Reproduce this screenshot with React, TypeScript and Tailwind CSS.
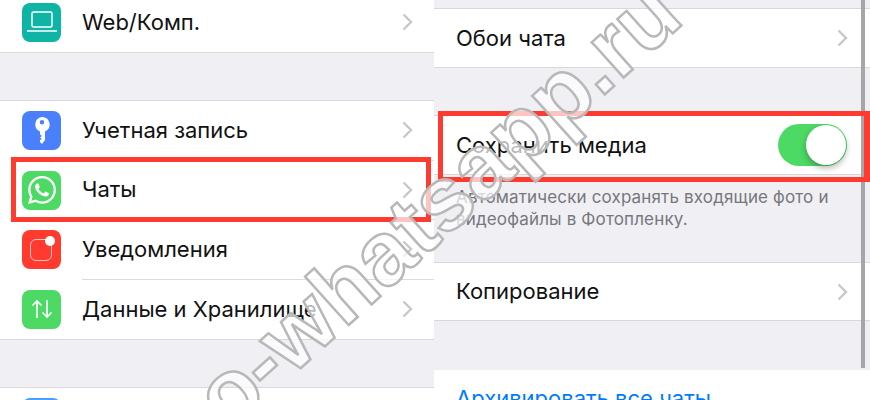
import React from 'react';
import { SiWhatsapp } from 'react-icons/si';

const Chevron = () => (
  <svg width="11" height="18" viewBox="0 0 11 18" className="shrink-0" fill="none">
    <path d="M1.5 1.5 9 9l-7.5 7.5" stroke="#c7c7cc" strokeWidth="2.4" />
  </svg>
);

const Laptop = () => (
  <svg width="30" height="24" viewBox="0 0 30 24" fill="none" stroke="#fff" strokeWidth="1.5">
    <rect x="5" y="2" width="20" height="15" rx="1.5" />
    <path d="M0 21h30" />
  </svg>
);

const Key = () => (
  <svg width="16" height="28" viewBox="0 0 16 28" fill="#fff">
    <path d="M8 0a7.5 7.5 0 0 1 3 14.4V23l-3 4-2-2v-2l2-1-2-1.5 2-1.5-2-1.5v-3.100A7.500 7.500 0 0 1 8 0Zm0 3a2.200 2.200 0 1 0 0 4.400A2.200 2.200 0 0 0 8 3Z" fillRule="evenodd" />
  </svg>
);

const Notif = () => (
  <div className="relative w-full h-full">
    <div className="absolute left-[8px] top-[9px] w-[22px] h-[22px] rounded-[6px] border border-[#ffc4bf]" />
    <div className="absolute left-[23px] top-[6px] w-[10px] h-[10px] rounded-full bg-white" />
  </div>
);

const Arrows = () => (
  <svg width="22" height="20" viewBox="0 0 22 20" fill="none" stroke="#fff" strokeWidth="1.7">
    <path d="M6 19V2M1.500 6.500 6 2l4.500 4.500M16 1v17M11.500 13.500 16 18l4.500-4.500" />
  </svg>
);

const IconBox = ({ className, children }: { className: string; children?: React.ReactNode }) => (
  <div className={`w-[39px] h-[39px] rounded-[8px] shrink-0 flex items-center justify-center ${className}`}>
    {children}
  </div>
);

const Row = ({ icon, label, sep = false }: { icon: React.ReactNode; label: string; sep?: boolean }) => (
  <div className="h-[59.5px] pl-[22px] flex items-center gap-[21px]">
    {icon}
    <div className={`flex-1 h-full flex items-center justify-between pr-[21px] ${sep ? 'border-b border-[#dcdce0]' : ''}`}>
      <span>{label}</span>
      <Chevron />
    </div>
  </div>
);

const Plain = ({ label }: { label: string }) => (
  <div className="h-full pl-[22px] pr-[22px] flex items-center justify-between">
    <span>{label}</span>
    <Chevron />
  </div>
);

export default function App() {
  return (
    <div
      className="relative w-[870px] h-[400px] overflow-hidden flex bg-[#efeff4] text-[22px] text-[#111]"
      style={{ fontFamily: 'Inter, "Liberation Sans", sans-serif' }}
    >
      {/* left phone */}
      <div className="w-[434px] shrink-0 flex flex-col">
        <div className="bg-white h-[53px] shrink-0 pb-[8px] pl-[22px] pr-[21px] flex items-center gap-[21px] border-b border-[#d8d8dc]">
          <IconBox className="bg-[#0fb5a4]"><Laptop /></IconBox>
          <div className="flex-1 flex items-center justify-between">
            <span>Web/Комп.</span>
            <Chevron />
          </div>
        </div>
        <div className="h-[47px] shrink-0" />
        <div className="bg-white border-y border-[#d8d8dc] shrink-0">
          <Row icon={<IconBox className="bg-[#4a80fb]"><Key /></IconBox>} label="Учетная запись" sep />
          <Row icon={<IconBox className="bg-[#4cd964]"><SiWhatsapp className="text-white text-[28px]" /></IconBox>} label="Чаты" sep />
          <Row icon={<IconBox className="bg-[#ff3b30]"><Notif /></IconBox>} label="Уведомления" sep />
          <Row icon={<IconBox className="bg-[#4cd964]"><Arrows /></IconBox>} label="Данные и Хранилище" />
        </div>
        <div className="h-[47px] shrink-0" />
        <div className="bg-white border-t border-[#d8d8dc] flex-1 pl-[22px] pt-[10px]">
          <div className="w-[39px] h-[39px] rounded-[8px] bg-[#4a9ffb]" />
        </div>
      </div>

      {/* right phone */}
      <div className="flex-1 flex flex-col">
        <div className="h-[8px] shrink-0" />
        <div className="h-[60px] shrink-0 bg-white border-y border-[#d8d8dc]">
          <Plain label="Обои чата" />
        </div>
        <div className="h-[47px] shrink-0" />
        <div className="h-[60px] shrink-0 bg-white border-y border-[#d8d8dc] pl-[22px] pr-[23px] flex items-center justify-between">
          <span>Сохранить медиа</span>
          <div className="w-[69px] h-[42px] rounded-full bg-[#4cd964] flex items-center justify-end pr-[1px]">
            <div className="w-[40px] h-[40px] rounded-full bg-white shadow-[0_3px_6px_rgba(0,0,0,0.3)]" />
          </div>
        </div>
        <div className="h-[87px] shrink-0 pl-[22px] pt-[11px] text-[17px] leading-[22px] tracking-[0.15px] text-[#77777c]">
          Автоматически сохранять входящие фото и
          <br />
          видеофайлы в Фотопленку.
        </div>
        <div className="h-[59px] shrink-0 bg-white border-y border-[#d8d8dc]">
          <Plain label="Копирование" />
        </div>
        <div className="h-[49px] shrink-0" />
        <div className="flex-1 bg-white pl-[22px] pt-[12px] text-[#007aff]">Архивировать все чаты</div>
      </div>

      {/* scroll indicator */}
      <div className="absolute left-[861px] top-0 w-[4px] h-[368px] bg-[#a6a6a9]" />

      {/* red highlight frames */}
      <div className="absolute left-[11px] top-[157px] w-[420px] h-[65px] border-[5px] border-[#ff3b30]" />
      <div className="absolute left-[438px] top-[111px] w-[432px] h-[71px] border-[5px] border-[#ff3b30] border-r-[6px]" />

      {/* watermark */}
      <div
        className="absolute left-[208px] top-[365px] origin-left -rotate-[42deg] whitespace-nowrap font-bold text-[90px] leading-none text-white/70 [-webkit-text-stroke:2.5px_#b8b8b8]"
        style={{ fontFamily: '"Liberation Sans", sans-serif' }}
      >
        o-whatsapp.ru
      </div>
    </div>
  );
}
